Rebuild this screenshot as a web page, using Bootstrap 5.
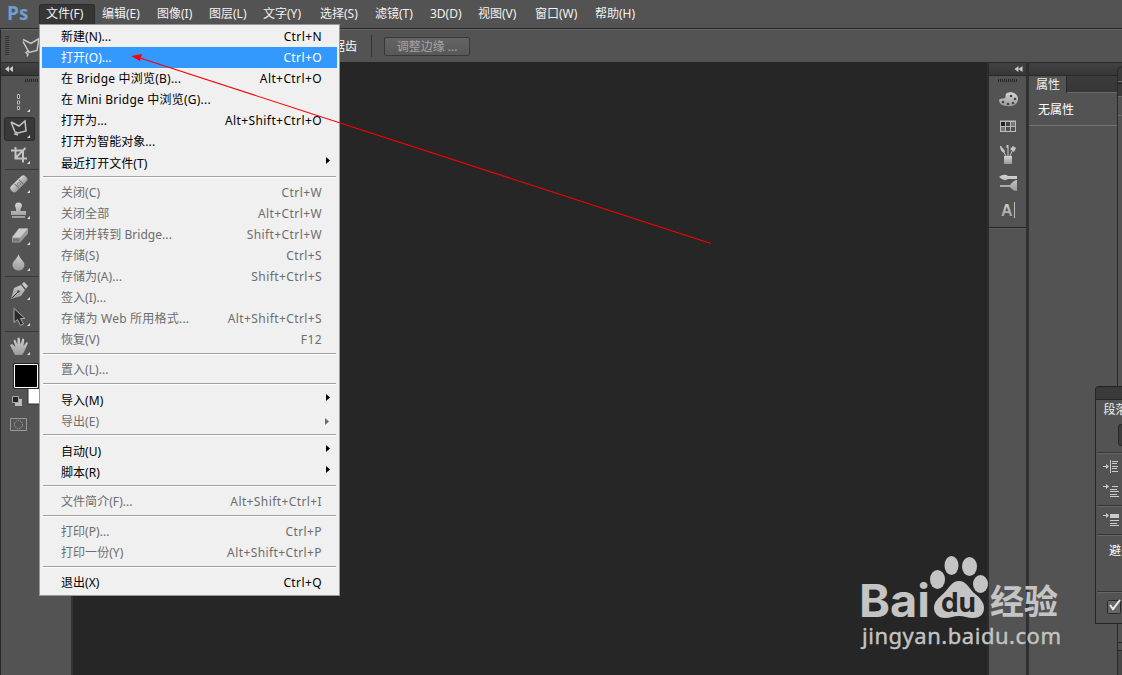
<!DOCTYPE html>
<html lang="zh-CN">
<head>
<meta charset="utf-8">
<title>Ps</title>
<link rel="stylesheet" href="https://cdn.jsdelivr.net/npm/bootstrap@5.3.0/dist/css/bootstrap.min.css">
<style>
body{font:12px/21px "Noto Sans","Noto Sans CJK SC",sans-serif;background:#535353;color:#f2f2f2;width:1122px;height:675px}
.app-bar{height:29px;border-bottom:1px solid #282828}
.logo{width:39px;padding-left:7px;font:bold 19px/27px "Open Sans",sans-serif;color:#6f9fcf}
.app-bar .nav-link{height:20px;margin-top:4px;padding:0 0 0 7px;line-height:20px;color:#f2f2f2;white-space:nowrap;font-size:12px}
.app-bar .active{background:#363636;border:1px solid #2c2c2c;border-bottom:0;border-radius:3px 3px 0 0;padding-left:6px;line-height:18px}
.opt-bar{height:33px;border-top:1px solid #686868;border-left:1px solid #282828}
.btn-edge{width:86px;height:19px;padding:0;border:1px solid #383838;border-radius:2px;font-size:12px;line-height:17px;color:#a4a4a4;background:linear-gradient(#646464,#585858)}
.file-menu{left:39px;top:24px;width:301px;height:572px;background:#f0f0f0;border:1px solid #999;border-radius:0;padding:1px 2px;font-size:12px;color:#000;z-index:5;min-width:0}
.file-menu .dropdown-item{height:21px;padding:0 15px 0 19px;line-height:22px;color:#000}
.file-menu .dropdown-item>span:first-child{letter-spacing:.05px}
.file-menu .dropdown-item>.wide:first-child{letter-spacing:.22px}
.file-menu .dropdown-item>span:nth-child(2){letter-spacing:.4px}
.file-menu .disabled{color:#6d6d6d}
.file-menu .active{background:#3399ff;color:#fff}
.file-menu .dropdown-divider{height:2px;margin:3px 1px 4px;border-top:1px solid #a0a0a0;background:#fff;opacity:1}
.file-menu .has-sub{padding-right:7px}
.has-sub>span{position:relative;top:1px}
.has-sub svg{margin-top:5px}
.tool-col{width:71px;border-left:1px solid #282828}
.col-head{height:14px;background:linear-gradient(#424242,#363636);border-top:1px solid #282828;border-bottom:1px solid #282828}
.doc-area{background:#262626;border-left:2px solid #343434}
.dock-icons{width:42px;border-left:2px solid #2c2c2c;border-right:3px solid #303030}
.props-tabs{height:17px;background:linear-gradient(#3c3c3c,#363636);border-bottom:1px solid #686868}
.props-tabs .tab-on{width:38px;height:17px;background:#535353;border-right:1px solid #282828;padding-left:7px;line-height:18px}
.props-body{height:33px;border-bottom:1px solid #737373;padding:8px 9px 0;line-height:18px;color:#fff}
.para-panel{left:1095px;top:386px;width:27px;height:238px;background:#535353;border:1px solid #242424;border-right:0;border-radius:4px 0 0 0;z-index:3}
.over{position:absolute;left:0;top:0;z-index:6;pointer-events:none}
</style>
</head>
<body class="d-flex flex-column overflow-hidden position-relative m-0">
<nav class="app-bar d-flex flex-shrink-0">
<div class="logo">Ps</div>
<a class="nav-link active" style="width:56px">文件(F)</a>
<a class="nav-link" style="width:55px">编辑(E)</a>
<a class="nav-link" style="width:52px">图像(I)</a>
<a class="nav-link" style="width:54px">图层(L)</a>
<a class="nav-link" style="width:57px">文字(Y)</a>
<a class="nav-link" style="width:55px">选择(S)</a>
<a class="nav-link" style="width:55px">滤镜(T)</a>
<a class="nav-link" style="width:48px">3D(D)</a>
<a class="nav-link" style="width:57px">视图(V)</a>
<a class="nav-link" style="width:60px">窗口(W)</a>
<a class="nav-link">帮助(H)</a>
</nav>
<div class="opt-bar d-flex align-items-center flex-shrink-0">
<svg width="332" height="30"><path d="M5 5v20M7 5v20" stroke="#333" stroke-width="2" stroke-dasharray="1 1"/><path d="M22 8.500l8 4 8-5-2 12-8 2-6-11m6 9l-3 2 2 2-1 2" fill="none" stroke="#c8c8c8" stroke-width="1.5"/></svg>
<span class="text-white">锯齿</span>
<div class="ms-2 me-2" style="width:7px;height:22px;border-right:1px solid #333"></div>
<button class="btn btn-edge ms-1">调整边缘 ...</button>
</div>
<main class="d-flex flex-grow-1" style="min-height:0">
<aside class="tool-col flex-shrink-0">
<div class="col-head"></div>
<svg width="70" height="599" viewBox="1 76 70 599">
<defs><linearGradient id="g" x2="0" y2="1"><stop stop-color="#d4d4d4"/><stop offset="1" stop-color="#9a9a9a"/></linearGradient></defs>
<path d="M25 80.500h22" stroke="#262626" stroke-width="3" stroke-dasharray="1 1"/>
<path d="M17.500 94.500h2v4h-2zM17.500 101v3h2v-3zM17.500 106.500h2v3h-2z" fill="#333" stroke="#bbb"/>
<rect x="4.500" y="117.500" width="30" height="23" rx="2" fill="#383838" stroke="#292929"/>
<path d="M11 122l8 4 6-5 1 10-8 2-3-1-4-10m6 10l-2 2 3 1" fill="none" stroke="#c4c4c4" stroke-width="1.500"/>
<path d="M11 150.500h12v12M15.500 147v11.500H27M15.500 158l10-10" fill="none" stroke="#c4c4c4" stroke-width="2"/>
<path d="M5 169.500h34M5 276.500h34M5 331.500h34" stroke="#383838"/>
<g transform="rotate(-45 19 184)"><rect x="9" y="180" width="20" height="7.500" rx="3" fill="url(#g)"/><path d="M16 181v6M22 181v6" stroke="#666"/><path d="M17.500 183h4m-4 2h4" stroke="#555" stroke-dasharray="1 1"/></g>
<path d="M15 206a3.500 3.500 0 1 1 7 0l-1.500 3v2H26v4H11v-4h5v-2zM12 216h13v2H12z" fill="url(#g)"/>
<path d="M19 228.500h9v5l-8 9h-8v-5z" fill="#9a9a9a"/><path d="M19 228.500h9l-8 9h-8z" fill="#ccc"/><path d="M13 238.500h6.500v3H13z" fill="#777"/>
<path d="M18.500 254c1 5 6 7 6 11a6 5.500 0 0 1-12 0c0-4 5-6 6-11z" fill="url(#g)"/>
<path d="M11 299l3-11 7-3 4 5-4 6zM22 284l2-2 4 4-2 3z" fill="url(#g)"/><path d="M12 298l6-6" stroke="#444"/><circle cx="18.500" cy="291.500" r="1.200" fill="#444"/>
<path d="M14 308.500v14l3.500-3 3 6 3-1.500-3-5.500h4.500z" fill="#2a2a2a" stroke="#aaa"/>
<path d="M10 345l2-1 3.500 3-2-6.500 1.500-1 2.500 5 0-6.500 2-.5 1 7 2-6 1.700.5-.7 7 3-4 1.500 1-4 9-2 3h-7z" fill="url(#g)"/>
<path d="M30 109v3h-3zM30 135v3h-3zM30 161v3h-3zM30 190v3h-3zM30 216v3h-3zM30 242v3h-3zM30 268v3h-3zM30 297v3h-3zM30 323v3h-3zM30 352v3h-3z" fill="#ddd"/>
<path d="M28 388h18v16H28z" fill="#fff" stroke="#333"/><path d="M13.500 363.500h25v25h-25z" stroke="#262626"/><path d="M14.500 364.500h23v23h-23z" fill="#000" stroke="#fff"/>
<path d="M15 399h7v7h-7z" fill="#bbb"/><path d="M12.500 396.500h6v6h-6z" fill="#222" stroke="#aaa"/>
<path d="M10.500 418.500h16v12h-16z" fill="#555" stroke="#999"/><circle cx="18.500" cy="424.500" r="4" fill="none" stroke="#bbb" stroke-dasharray="1 1.200"/>
</svg>
</aside>
<section class="doc-area flex-grow-1"></section>
<aside class="dock-icons flex-shrink-0">
<div class="col-head"></div>
<svg width="37" height="151" viewBox="989 76 37 151" class="d-block">
<path d="M998 80.500h20" stroke="#262626" stroke-width="3" stroke-dasharray="1 1"/>
<path d="M1007 93c5-2 11 1 11 6s-5 8-11 7c-5 0-8-3-8-6 1-2 5-1 6-2 1-1 0-4 2-5z" fill="url(#g)"/><g fill="#444"><circle cx="1011" cy="96" r="1.300"/><circle cx="1015" cy="99" r="1.300"/><circle cx="1013" cy="103" r="1.300"/><circle cx="1008" cy="104" r="1.300"/><circle cx="1003" cy="102" r="1.300"/></g>
<path d="M1000 120.500h16v11.500h-16z" fill="#bbb"/><path d="M1001 122h4v4h-4z" fill="#222"/><path d="M1006 122h4v4h-4z" fill="#444"/><path d="M1011 122h4v4h-4zM1001 127h4v4h-4z" fill="#777"/><path d="M1006 127h4v4h-4zM1011 127h4v4h-4z" fill="#505050"/>
<path d="M1004 156h8v8h-8z" fill="url(#g)"/><path d="M1006 156l-4-7M1008 156v-9M1010 156l3-7" stroke="#c4c4c4"/><path d="M1000 146l1 0 4 5-1 2q-4-2-4-7zM1006.500 148v-3h2v3zM1010 149l3-3 3 2-2 4z" fill="#c4c4c4"/>
<path d="M999 177q5-4 9-1h9v3h-9q-4 3-9-2zM1000 185h10q4-5 7-5v11q-4 0-7-4h-10z" fill="url(#g)"/>
<text x="1001" y="216" font-family="Liberation Sans" font-size="16" font-weight="bold" fill="url(#g)">A</text><path d="M1014.500 202v16" stroke="#bbb"/>
</svg>
<div style="border-top:1px solid #282828;height:2px;background:#5c5c5c"></div>
</aside>
<aside style="width:93px" class="flex-shrink-0">
<div class="col-head"></div>
<div class="props-tabs"><div class="tab-on">属性</div></div>
<div class="props-body">无属性</div>
</aside>
</main>
<div class="dropdown-menu d-block file-menu position-absolute">
<a class="dropdown-item d-flex justify-content-between"><span>新建(N)...</span><span>Ctrl+N</span></a>
<a class="dropdown-item d-flex justify-content-between active"><span>打开(O)...</span><span>Ctrl+O</span></a>
<a class="dropdown-item d-flex justify-content-between"><span class="wide">在 Bridge 中浏览(B)...</span><span>Alt+Ctrl+O</span></a>
<a class="dropdown-item"><span class="wide">在 Mini Bridge 中浏览(G)...</span></a>
<a class="dropdown-item d-flex justify-content-between"><span>打开为...</span><span>Alt+Shift+Ctrl+O</span></a>
<a class="dropdown-item"><span>打开为智能对象...</span></a>
<a class="dropdown-item has-sub d-flex justify-content-between"><span>最近打开文件(T)</span><svg width="5" height="7"><path d="M1 0l4 3.500-4 3.500z"/></svg></a>
<hr class="dropdown-divider">
<a class="dropdown-item disabled d-flex justify-content-between"><span>关闭(C)</span><span>Ctrl+W</span></a>
<a class="dropdown-item disabled d-flex justify-content-between"><span>关闭全部</span><span>Alt+Ctrl+W</span></a>
<a class="dropdown-item disabled d-flex justify-content-between"><span>关闭并转到 Bridge...</span><span>Shift+Ctrl+W</span></a>
<a class="dropdown-item disabled d-flex justify-content-between"><span>存储(S)</span><span>Ctrl+S</span></a>
<a class="dropdown-item disabled d-flex justify-content-between"><span>存储为(A)...</span><span>Shift+Ctrl+S</span></a>
<a class="dropdown-item disabled"><span>签入(I)...</span></a>
<a class="dropdown-item disabled d-flex justify-content-between"><span class="wide">存储为 Web 所用格式...</span><span>Alt+Shift+Ctrl+S</span></a>
<a class="dropdown-item disabled d-flex justify-content-between"><span>恢复(V)</span><span>F12</span></a>
<hr class="dropdown-divider">
<a class="dropdown-item disabled"><span>置入(L)...</span></a>
<hr class="dropdown-divider">
<a class="dropdown-item has-sub d-flex justify-content-between"><span>导入(M)</span><svg width="5" height="7"><path d="M1 0l4 3.500-4 3.500z"/></svg></a>
<a class="dropdown-item disabled has-sub d-flex justify-content-between"><span>导出(E)</span><svg width="5" height="10"><path d="M0 3l4 3.500-4 3.500z" fill="#6d6d6d"/></svg></a>
<hr class="dropdown-divider">
<a class="dropdown-item has-sub d-flex justify-content-between"><span>自动(U)</span><svg width="5" height="7"><path d="M1 0l4 3.500-4 3.500z"/></svg></a>
<a class="dropdown-item has-sub d-flex justify-content-between"><span>脚本(R)</span><svg width="5" height="7"><path d="M1 0l4 3.500-4 3.500z"/></svg></a>
<hr class="dropdown-divider">
<a class="dropdown-item disabled d-flex justify-content-between"><span>文件简介(F)...</span><span>Alt+Shift+Ctrl+I</span></a>
<hr class="dropdown-divider">
<a class="dropdown-item disabled d-flex justify-content-between"><span>打印(P)...</span><span>Ctrl+P</span></a>
<a class="dropdown-item disabled d-flex justify-content-between"><span>打印一份(Y)</span><span>Alt+Shift+Ctrl+P</span></a>
<hr class="dropdown-divider">
<a class="dropdown-item d-flex justify-content-between"><span>退出(X)</span><span>Ctrl+Q</span></a>
</div>
<div class="para-panel position-absolute overflow-hidden">
<svg width="26" height="236" viewBox="1096 387 26 236" class="d-block">
<path d="M1096 387h26v12h-26z" fill="#3a3a3a"/><path d="M1096 399.500h26" stroke="#282828"/>
<text x="1103.500" y="413.500" font-size="12" fill="#eee">段落</text>
<rect x="1118.500" y="424.500" width="10" height="21" rx="2" fill="#3c3c3c" stroke="#2a2a2a"/>
<path d="M1097 452.500h25M1097 505.500h25M1097 534.500h25M1097 591.500h25" stroke="#353535"/><path d="M1097 453.500h25M1097 506.500h25M1097 535.500h25M1097 592.500h25" stroke="#666"/>
<path d="M1103 466.500h5M1103 486.500h5M1103 515.500h5M1110.500 460v13M1112 461.500h6M1112 463.500h5M1112 466.500h6M1112 468.500h5M1112 471.500h6M1112 486.500h6M1110 489.500h7M1110 491.500h9M1110 494.500h7M1110 496.500h9M1110 520.500h9M1110 523.500h7M1110 525.500h9" stroke="#ccc"/>
<path d="M1106 464l3 2.500-3 2.500zM1106 484l3 2.500-3 2.500zM1106 513l3 2.500-3 2.500z" fill="#ccc"/><path d="M1110 514h9v4h-9z" fill="#ccc"/>
<text x="1109" y="555" font-size="12" fill="#fff">避头</text>
<rect x="1107.500" y="600.500" width="13" height="13" rx="1" fill="#666" stroke="#2a2a2a"/><path d="M1110 605l3 4 7-9" fill="none" stroke="#eee" stroke-width="2"/>
</svg></div>
<svg class="over" width="1122" height="675">
<path d="M9 66v6l-4-3zM13 66v6l-4-3zM1018.500 66v6l-4-3zM1022.500 66v6l-4-3z" fill="#ccc"/>
<path d="M137 57L711 243.500" stroke="#f00" stroke-width="1.100"/><path d="M131 56l11-2-2 7z" fill="#f00"/>
<path d="M1118 67h4v29h-4z" fill="#3a3a3a"/><path d="M1118 97h4v289h-4z" fill="#535353"/><path d="M1118 81.500h4M1118 96.500h4M1118 115.500h4" stroke="#6a6a6a"/><path d="M1118 83.500h4" stroke="#222"/>
<path d="M1117.500 386V69.500l2-2.500h3M1117.500 624v51M1118 642.500h4M1118 650.500h4" stroke="#292929" fill="none"/><path d="M1118 651h4v24h-4z" fill="#474747"/>
<g fill="#c4c4c4">
<text x="859" y="617" font-family="Inter" font-size="45" font-weight="bold" textLength="71" lengthAdjust="spacingAndGlyphs">Bai</text>
<ellipse cx="937.500" cy="579.500" rx="7.500" ry="9.500"/><ellipse cx="951.500" cy="565.500" rx="7" ry="9.500"/><ellipse cx="969.500" cy="566.500" rx="7.500" ry="9.500"/><ellipse cx="980.500" cy="584" rx="7.500" ry="9"/>
<path d="M959 581c7 0 9 6 15 12 6 5 10 9 10 15 0 7-5 10-11 10-5 0-9-2-14-2s-9 2-14 2c-7 0-11-5-11-10 0-7 5-10 10-15 6-6 8-12 15-12z"/>
<text x="941" y="612" font-family="Inter" font-size="27" font-weight="bold" fill="#262626" textLength="35" lengthAdjust="spacingAndGlyphs">du</text>
<text x="990" y="614" font-family="Noto Sans CJK SC" font-size="34" font-weight="bold">经验</text>
<text x="862" y="644" font-family="Noto Sans" font-size="22" textLength="199" stroke="#c4c4c4" stroke-width=".4">jingyan.baidu.com</text></g>
</svg>
<script src="https://cdn.jsdelivr.net/npm/bootstrap@5.3.0/dist/js/bootstrap.bundle.min.js"></script>
</body>
</html>
